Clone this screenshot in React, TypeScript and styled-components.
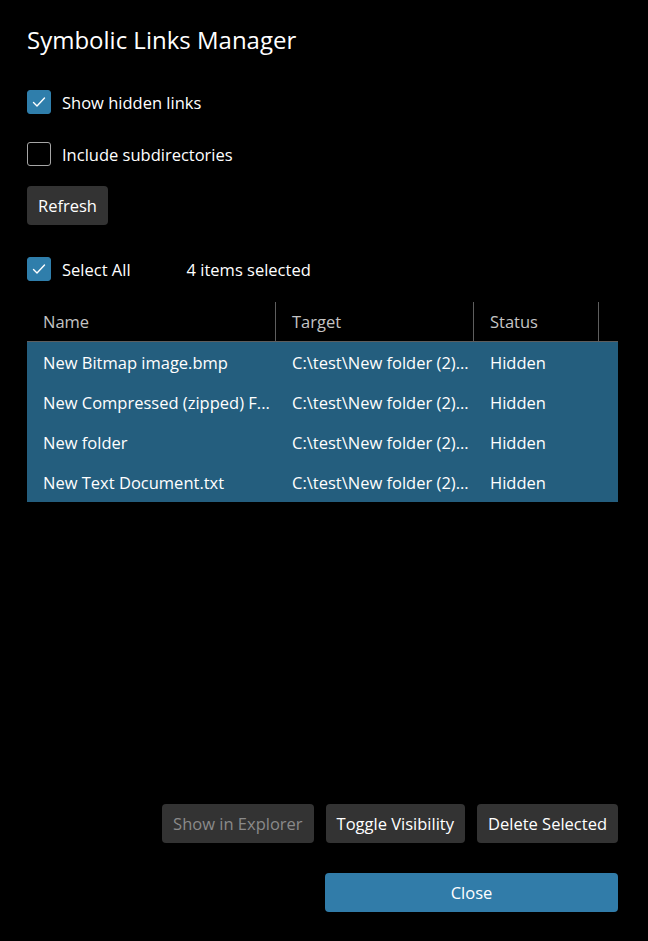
import React, { useState } from 'react';
import styled, { createGlobalStyle } from 'styled-components';

const GlobalStyle = createGlobalStyle`
  html, body {
    margin: 0;
    padding: 0;
    background: #000;
  }
  body {
    font-family: 'Segoe UI', 'Open Sans', 'Noto Sans', sans-serif;
    color: #fff;
  }
`;

const Dialog = styled.div`
  height: 100vh;
  box-sizing: border-box;
  padding: 24px 30px 29px 27px;
  display: flex;
  flex-direction: column;
  background: #000;
`;

const Title = styled.h1`
  margin: 0 0 34px;
  font-size: 24px;
  font-weight: 400;
  line-height: 32px;
`;

const CheckRow = styled.label<{ $gap?: number }>`
  display: flex;
  align-items: center;
  gap: 11px;
  height: 24px;
  font-size: 16.5px;
  margin-bottom: ${p => p.$gap ?? 28}px;
  cursor: pointer;
`;

const Box = styled.span<{ $checked: boolean }>`
  width: 24px;
  height: 24px;
  box-sizing: border-box;
  border-radius: 3px;
  display: flex;
  align-items: center;
  justify-content: center;
  flex-shrink: 0;
  background: ${p => (p.$checked ? '#2f7eab' : 'transparent')};
  border: 1px solid ${p => (p.$checked ? '#2f7eab' : '#a6a6a6')};
`;

const Button = styled.button`
  font-family: inherit;
  font-size: 16.5px;
  height: 39px;
  padding: 0 11px;
  border: none;
  border-radius: 4px;
  background: #333;
  color: ${p => (p.disabled ? '#8a8a8a' : '#fff')};
  cursor: ${p => (p.disabled ? 'default' : 'pointer')};
`;

const RefreshButton = styled(Button)`
  align-self: flex-start;
  margin-bottom: 32px;
`;

const SelectBar = styled.div`
  display: flex;
  align-items: center;
  margin-bottom: 20px;
`;

const Count = styled.span`
  font-size: 16.5px;
  margin-left: 56px;
`;

const Table = styled.div`
  flex: 1;
  display: flex;
  flex-direction: column;
`;

const HeaderRow = styled.div`
  display: grid;
  grid-template-columns: 249px 198px 125px 1fr;
  height: 40px;
  border-bottom: 1px solid #5e5e5e;
`;

const HeaderCell = styled.div<{ $last?: boolean }>`
  display: flex;
  align-items: center;
  padding-left: 16px;
  font-size: 16.5px;
  color: #c4c4c4;
  border-right: ${p => (p.$last ? 'none' : '1px solid #5e5e5e')};
  margin-top: 1px;
`;

const Row = styled.div<{ $selected: boolean }>`
  display: grid;
  grid-template-columns: 249px 198px 125px 1fr;
  height: 40px;
  background: ${p => (p.$selected ? '#245e7e' : 'transparent')};
  cursor: default;
`;

const Cell = styled.div`
  display: flex;
  align-items: center;
  padding-left: 16px;
  font-size: 16.5px;
  white-space: nowrap;
  min-width: 0;
`;

const ActionBar = styled.div`
  display: flex;
  justify-content: flex-end;
  gap: 12px;
  margin-bottom: 30px;
`;

const CloseButton = styled(Button)`
  align-self: flex-end;
  width: 293px;
  background: #317ca9;
`;

const Check = () => (
  <svg width="16" height="16" viewBox="0 0 16 16" fill="none">
    <path d="M2.5 8.5 L6 12 L13.5 4" stroke="#fff" strokeWidth="1.4" strokeLinecap="round" strokeLinejoin="round" />
  </svg>
);

const CheckBox: React.FC<{ checked: boolean; onToggle: () => void; label: string; gap?: number }> = ({ checked, onToggle, label, gap }) => (
  <CheckRow $gap={gap} onClick={onToggle}>
    <Box $checked={checked}>{checked && <Check />}</Box>
    {label}
  </CheckRow>
);

// names and targets as the grid shows them, trimmed to the column
const links = [
  { name: 'New Bitmap image.bmp', target: 'C:\\test\\New folder (2)...' },
  { name: 'New Compressed (zipped) F...', target: 'C:\\test\\New folder (2)...' },
  { name: 'New folder', target: 'C:\\test\\New folder (2)...' },
  { name: 'New Text Document.txt', target: 'C:\\test\\New folder (2)...' },
];

const App: React.FC = () => {
  const [showHidden, setShowHidden] = useState(true);
  const [subdirs, setSubdirs] = useState(false);
  const [selected, setSelected] = useState<boolean[]>(links.map(() => true));

  const count = selected.filter(Boolean).length;
  const allSelected = count === links.length;

  return (
    <Dialog>
      <GlobalStyle />
      <Title>Symbolic Links Manager</Title>
      <CheckBox checked={showHidden} onToggle={() => setShowHidden(v => !v)} label="Show hidden links" />
      <CheckBox checked={subdirs} onToggle={() => setSubdirs(v => !v)} label="Include subdirectories" gap={20} />
      <RefreshButton>Refresh</RefreshButton>

      <SelectBar>
        <CheckBox
          checked={allSelected}
          onToggle={() => setSelected(links.map(() => !allSelected))}
          label="Select All"
          gap={0}
        />
        <Count>{count} items selected</Count>
      </SelectBar>

      <Table>
        <HeaderRow>
          <HeaderCell>Name</HeaderCell>
          <HeaderCell>Target</HeaderCell>
          <HeaderCell>Status</HeaderCell>
          <HeaderCell $last />
        </HeaderRow>
        {links.map((l, i) => (
          <Row
            key={l.name}
            $selected={selected[i]}
            onClick={() => setSelected(s => s.map((v, j) => (j === i ? !v : v)))}
          >
            <Cell>{l.name}</Cell>
            <Cell>{l.target}</Cell>
            <Cell>Hidden</Cell>
            <Cell />
          </Row>
        ))}
      </Table>

      <ActionBar>
        <Button disabled>Show in Explorer</Button>
        <Button>Toggle Visibility</Button>
        <Button>Delete Selected</Button>
      </ActionBar>
      <CloseButton>Close</CloseButton>
    </Dialog>
  );
};

export default App;
